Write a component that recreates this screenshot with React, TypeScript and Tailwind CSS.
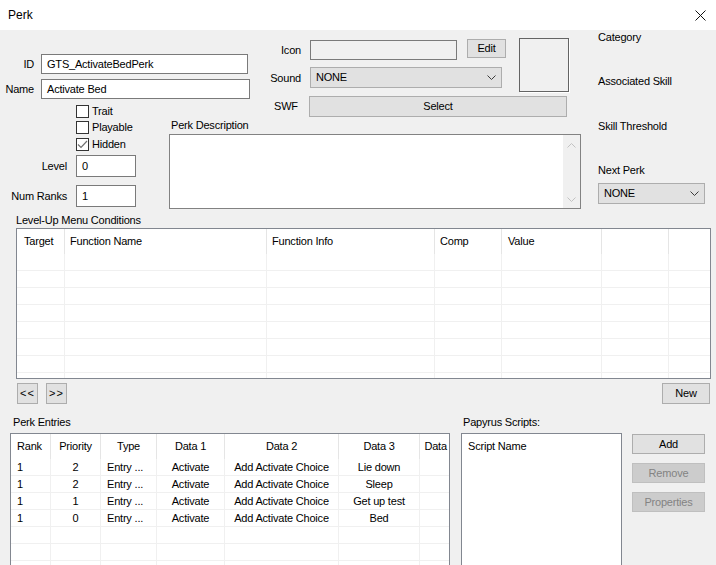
import React from "react";

type Col = { label: string; w: string; align: string };

function Chevron({ up = false }: { up?: boolean }) {
  return (
    <svg width="9" height="5" viewBox="0 0 9 5" className="shrink-0">
      <path
        d={up ? "M0.5 4.5 L4.5 0.5 L8.5 4.5" : "M0.5 0.5 L4.5 4.5 L8.5 0.5"}
        fill="none"
        stroke="currentColor"
        strokeWidth="1"
      />
    </svg>
  );
}

function Field({ value = "", className = "" }: { value?: string; className?: string }) {
  return (
    <div className={`flex shrink-0 items-center border border-[#7a7a7a] bg-white pl-[5px] ${className}`}>
      {value}
    </div>
  );
}

function Btn({
  children,
  className = "",
  disabled = false,
}: {
  children: React.ReactNode;
  className?: string;
  disabled?: boolean;
}) {
  const look = disabled
    ? "border-[#bfbfbf] bg-[#cccccc] text-[#838383]"
    : "border-[#adadad] bg-[#e1e1e1] text-black";
  return (
    <div className={`flex shrink-0 items-center justify-center border ${look} ${className}`}>{children}</div>
  );
}

function Combo({ value, className = "" }: { value: string; className?: string }) {
  return (
    <div
      className={`flex shrink-0 items-center justify-between border border-[#adadad] bg-[#e1e1e1] pl-[5px] pr-[5px] text-[#3c3c3c] ${className}`}
    >
      <span className="text-black">{value}</span>
      <Chevron />
    </div>
  );
}

function Check({ label, checked = false, className = "" }: { label: string; checked?: boolean; className?: string }) {
  return (
    <div className={`flex h-[16px] items-start ${className}`}>
      <span className="flex h-[13px] w-[13px] shrink-0 items-center justify-center border border-[#333333] bg-white">
        {checked && (
          <svg width="11" height="11" viewBox="0 0 11 11">
            <path d="M1 5.5 L4 8.5 L10 2" fill="none" stroke="#707070" strokeWidth="1.2" />
          </svg>
        )}
      </span>
      <span className="ml-[3px] leading-[13px]">{label}</span>
    </div>
  );
}

const condCols: Col[] = [
  { label: "Target", w: "w-[48px]", align: "pl-[7px]" },
  { label: "Function Name", w: "w-[202px]", align: "pl-[5px]" },
  { label: "Function Info", w: "w-[168px]", align: "pl-[5px]" },
  { label: "Comp", w: "w-[67px]", align: "pl-[5px]" },
  { label: "Value", w: "w-[100px]", align: "pl-[6px]" },
  { label: "", w: "w-[67px]", align: "" },
];

const entryCols: Col[] = [
  { label: "Rank", w: "w-[40px]", align: "justify-start pl-[6px]" },
  { label: "Priority", w: "w-[50px]", align: "justify-center" },
  { label: "Type", w: "w-[56px]", align: "justify-center" },
  { label: "Data 1", w: "w-[68px]", align: "justify-center" },
  { label: "Data 2", w: "w-[114px]", align: "justify-center" },
  { label: "Data 3", w: "w-[81px]", align: "justify-center" },
  { label: "Data 4", w: "w-[41px]", align: "justify-center" },
];

// body alignment differs from header for the Type column
const entryBodyAlign = [
  "justify-start pl-[6px]",
  "justify-center",
  "justify-start pl-[6px]",
  "justify-center",
  "justify-center",
  "justify-center",
  "justify-center",
];

const entries = [
  ["1", "2", "Entry ...", "Activate", "Add Activate Choice", "Lie down", ""],
  ["1", "2", "Entry ...", "Activate", "Add Activate Choice", "Sleep", ""],
  ["1", "1", "Entry ...", "Activate", "Add Activate Choice", "Get up test", ""],
  ["1", "0", "Entry ...", "Activate", "Add Activate Choice", "Bed", ""],
  ["", "", "", "", "", "", ""],
  ["", "", "", "", "", "", ""],
  ["", "", "", "", "", "", ""],
];

export default function App() {
  return (
    <div className="h-[565px] w-[716px] overflow-hidden bg-[#f0f0f0] font-['Liberation_Sans',Arial,sans-serif] text-[11px] tracking-[-0.2px] text-black">
      {/* Title bar */}
      <div className="flex h-[30px] items-center justify-between bg-white pl-[8px] pr-[10px]">
        <span className="text-[12px] tracking-normal">Perk</span>
        <svg width="11" height="11" viewBox="0 0 11 11">
          <path d="M0.5 0.5 L10.5 10.5 M10.5 0.5 L0.5 10.5" stroke="#111" strokeWidth="1" />
        </svg>
      </div>

      {/* Top fields */}
      <div className="flex h-[183px]">
        <div className="flex w-[169px] shrink-0 flex-col">
          <div className="mt-[24px] flex h-[20px] items-center">
            <span className="w-[41px] shrink-0 pr-[7px] text-right">ID</span>
            <Field className="h-[20px] w-[207px]" value="GTS_ActivateBedPerk" />
          </div>
          <div className="mt-[5px] flex h-[20px] items-center">
            <span className="w-[41px] shrink-0 pr-[7px] text-right">Name</span>
            <Field className="h-[20px] w-[209px]" value="Activate Bed" />
          </div>
          <div className="mt-[6px] flex flex-col pl-[76px]">
            <Check label="Trait" />
            <Check label="Playable" />
            <Check label="Hidden" checked className="mt-[1px]" />
          </div>
          <div className="mt-[1px] flex items-center">
            <span className="w-[76px] shrink-0 pr-[9px] text-right">Level</span>
            <Field className="h-[22px] w-[60px]" value="0" />
          </div>
          <div className="mt-[8px] flex items-center">
            <span className="w-[76px] shrink-0 pr-[9px] text-right">Num Ranks</span>
            <Field className="h-[22px] w-[60px]" value="1" />
          </div>
        </div>

        <div className="flex w-[412px] shrink-0 flex-col">
          <div className="mt-[8px] flex items-start">
            <div className="flex flex-col">
              <div className="mt-[2px] flex items-start">
                <span className="h-[20px] w-[141px] shrink-0 pr-[9px] text-right leading-[20px]">Icon</span>
                <div className="h-[20px] w-[147px] shrink-0 border border-[#7a7a7a] bg-[#f0f0f0]" />
                <Btn className="-mt-[1px] ml-[10px] h-[19px] w-[39px]">Edit</Btn>
              </div>
              <div className="mt-[7px] flex items-center">
                <span className="mt-[2px] w-[141px] shrink-0 pr-[9px] text-right">Sound</span>
                <Combo className="h-[21px] w-[192px]" value="NONE" />
              </div>
            </div>
            <div className="ml-[13px] h-[54px] w-[50px] shrink-0 border border-[#646464] shadow-[1px_1px_0_#ffffff]" />
          </div>
          <div className="mt-[4px] flex items-center">
            <span className="w-[140px] shrink-0 pl-[105px]">SWF</span>
            <Btn className="h-[21px] w-[258px]">Select</Btn>
          </div>
          <div className="ml-[2px] h-[16px] leading-[16px]">Perk Description</div>
          <div className="mt-[1px] flex h-[75px] w-[412px] justify-end border border-[#828282] bg-white">
            <div className="flex w-[17px] flex-col items-center justify-between bg-[#f0f0f0] pb-[6px] pt-[8px] text-[#c2c2c2]">
              <Chevron up />
              <Chevron />
            </div>
          </div>
        </div>

        <div className="ml-[17px] flex w-[107px] shrink-0 flex-col">
          <span className="-mt-[1px] leading-[16px]">Category</span>
          <span className="mt-[28px] leading-[16px]">Associated Skill</span>
          <span className="mt-[29px] leading-[16px]">Skill Threshold</span>
          <span className="mt-[28px] leading-[16px]">Next Perk</span>
          <Combo className="mt-[5px] h-[21px] w-[107px]" value="NONE" />
        </div>
      </div>

      {/* Level-up conditions */}
      <div className="pl-[16px] leading-[15px]">Level-Up Menu Conditions</div>
      <div className="ml-[16px] h-[151px] w-[695px] overflow-hidden border border-[#828790] bg-white">
        <div className="flex h-[25px]">
          {condCols.map((c, i) => (
            <div key={i} className={`flex h-full shrink-0 items-center border-r border-[#e5e5e5] ${c.w} ${c.align}`}>
              {c.label}
            </div>
          ))}
          <div className="flex-1" />
        </div>
        {Array.from({ length: 8 }).map((_, r) => (
          <div key={r} className="flex h-[17px] border-b border-[#f0f0f0]">
            {condCols.map((c, i) => (
              <div key={i} className={`h-full shrink-0 border-r border-[#f0f0f0] ${c.w}`} />
            ))}
            <div className="flex-1" />
          </div>
        ))}
      </div>
      <div className="mt-[4px] flex pl-[17px] pr-[6px]">
        <Btn className="h-[21px] w-[21px] tracking-[1px]">&lt;&lt;</Btn>
        <Btn className="ml-[8px] h-[21px] w-[21px] tracking-[1px]">&gt;&gt;</Btn>
        <Btn className="ml-auto h-[21px] w-[48px]">New</Btn>
      </div>

      {/* Perk entries and scripts */}
      <div className="mt-[11px] flex items-start">
        <div className="ml-[10px] flex w-[440px] shrink-0 flex-col">
          <span className="pl-[3px] leading-[15px]">Perk Entries</span>
          <div className="mt-[3px] h-[140px] overflow-hidden border border-[#828790] bg-white">
            <div className="flex h-[25px]">
              {entryCols.map((c, i) => (
                <div
                  key={i}
                  className={`flex h-full shrink-0 items-center border-r border-[#e5e5e5] ${c.w} ${c.align}`}
                >
                  {c.label}
                </div>
              ))}
            </div>
            {entries.map((row, r) => (
              <div key={r} className="flex h-[17px] border-b border-[#f0f0f0]">
                {row.map((v, i) => (
                  <div
                    key={i}
                    className={`flex h-full shrink-0 items-center border-r border-[#f0f0f0] ${entryCols[i].w} ${entryBodyAlign[i]}`}
                  >
                    {v}
                  </div>
                ))}
              </div>
            ))}
          </div>
        </div>

        <div className="ml-[11px] flex w-[161px] shrink-0 flex-col">
          <span className="pl-[2px] leading-[15px]">Papyrus Scripts:</span>
          <div className="mt-[3px] h-[140px] border border-[#828790] bg-white">
            <div className="flex h-[25px] items-center pl-[6px]">Script Name</div>
          </div>
        </div>

        <div className="ml-[10px] mt-[19px] flex w-[73px] shrink-0 flex-col">
          <Btn className="h-[20px] w-[73px]">Add</Btn>
          <Btn disabled className="mt-[9px] h-[20px] w-[73px]">
            Remove
          </Btn>
          <Btn disabled className="mt-[9px] h-[20px] w-[73px]">
            Properties
          </Btn>
        </div>
      </div>
    </div>
  );
}
